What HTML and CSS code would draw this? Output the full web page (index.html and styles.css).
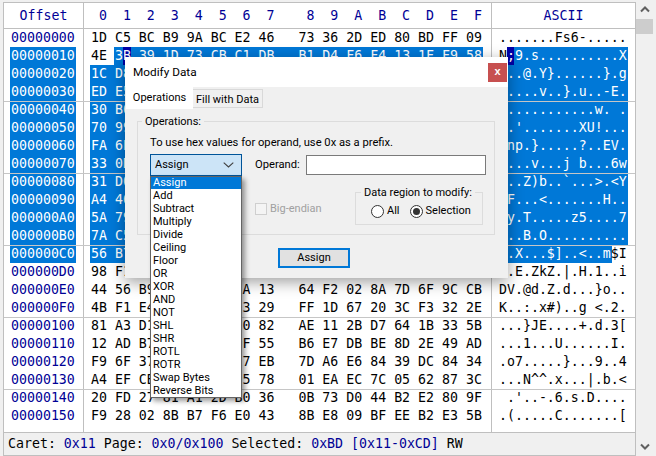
FILE: index.html
```html
<!DOCTYPE html>
<html lang="en">
<head>
<meta charset="utf-8">
<title>Modify Data</title>
<link rel="stylesheet" href="styles.css">
</head>
<body>
<div class="app">
  <div class="view">
    <div class="head"><div class="off c">Offset</div><div class="hex"> 0  1  2  3  4  5  6  7    8  9  A  B  C  D  E  F</div><div class="asc c">ASCII</div></div>
    <div class="body">
      <div class="group">
        <div class="row"><div class="off">00000000</div><div class="hex">1D C5 BC B9 9A BC E2 46   73 36 2D ED 80 BD FF 09</div><div class="asc">.......Fs6-.....</div></div>
        <div class="row"><div class="off"><span class="sel">00000010</span></div><div class="hex">4E <span class="sel">3<b class="caret">B</b> 39 1D 73 CB C1 DB   B1 D4 F6 F4 13 1F F9 58</span></div><div class="asc">N<b class="caret">;</b><span class="sel">9.s..........X</span></div></div>
        <div class="row"><div class="off"><span class="sel">00000020</span></div><div class="hex"><span class="sel">1C D8 40 B5 59 7D 8A 90   C3 11 E4 F7 06 7D A2 67</span></div><div class="asc"><span class="sel">...@.Y}......}.g</span></div></div>
        <div class="row"><div class="off"><span class="sel">00000030</span></div><div class="hex"><span class="sel">ED E5 A1 93 76 0C F2 7D   1B 75 C4 88 2D 45 9E 0A</span></div><div class="asc"><span class="sel">.....v..}.u..-E.</span></div></div>
      </div>
      <div class="group">
        <div class="row"><div class="off"><span class="sel">00000040</span></div><div class="hex"><span class="sel">30 B6 C2 81 F0 9D A3 17   D6 E2 B4 0F 77 1C 9A 05</span></div><div class="asc"><span class="sel">0...........w. .</span></div></div>
        <div class="row"><div class="off"><span class="sel">00000050</span></div><div class="hex"><span class="sel">70 99 27 C3 8E 04 B1 F6   12 D3 58 55 21 A7 90 CE</span></div><div class="asc"><span class="sel">p.'.......XU!...</span></div></div>
        <div class="row"><div class="off"><span class="sel">00000060</span></div><div class="hex"><span class="sel">FA 6E 70 E1 7D 93 0B C8   AF 16 3F 84 D2 45 56 F3</span></div><div class="asc"><span class="sel">.np.}.....?..EV.</span></div></div>
        <div class="row"><div class="off"><span class="sel">00000070</span></div><div class="hex"><span class="sel">33 0D 9C B2 76 E8 1A 95   6A 20 62 F4 07 CD 36 77</span></div><div class="asc"><span class="sel">3...v...j b...6w</span></div></div>
      </div>
      <div class="group">
        <div class="row"><div class="off"><span class="sel">00000080</span></div><div class="hex"><span class="sel">31 D0 8F 5A 29 62 B3 C7   60 A9 E5 1B 3E 94 3C 59</span></div><div class="asc"><span class="sel">1..Z)b..`...>.&lt;Y</span></div></div>
        <div class="row"><div class="off"><span class="sel">00000090</span></div><div class="hex"><span class="sel">A4 46 0E B7 D9 3C F1 82   C5 1D 96 E0 7A 48 B2 13</span></div><div class="asc"><span class="sel">.F...&lt;.......H..</span></div></div>
        <div class="row"><div class="off"><span class="sel">000000A0</span></div><div class="hex"><span class="sel">5A 79 C1 54 8D 03 EB 96   A2 7A 35 D4 1F 80 B9 37</span></div><div class="asc"><span class="sel">Zy.T.....z5....7</span></div></div>
        <div class="row"><div class="off"><span class="sel">000000B0</span></div><div class="hex"><span class="sel">7A C5 1E 42 A0 4F 92 D7   0C B8 F3 65 81 E9 2A C4</span></div><div class="asc"><span class="sel">z..B.O..........</span></div></div>
      </div>
      <div class="group">
        <div class="row"><div class="off"><span class="sel">000000C0</span></div><div class="hex"><span class="sel">56 B7 58 E3 0A 91 24 5D   C6 8F 3C D1 A4 6D</span> 24 49</div><div class="asc"><span class="sel">V.X...$]..&lt;..m</span>$I</div></div>
        <div class="row"><div class="off">000000D0</div><div class="hex">98 F1 45 B0 5A 6B 5A 8C   7C E3 48 9D 31 D6 A7 69</div><div class="asc">..E.ZkZ.|.H.1..i</div></div>
        <div class="row"><div class="off">000000E0</div><div class="hex">44 56 B9 40 64 C2 9A 13   64 F2 02 8A 7D 6F 9C CB</div><div class="asc">DV.@d.Z.d...}o..</div></div>
        <div class="row"><div class="off">000000F0</div><div class="hex">4B F1 E4 3A D0 78 23 29   FF 1D 67 20 3C F3 32 2E</div><div class="asc">K..:.x#)..g &lt;.2.</div></div>
      </div>
      <div class="group">
        <div class="row"><div class="off">00000100</div><div class="hex">81 A3 D1 7D 4A 45 C0 82   AE 11 2B D7 64 1B 33 5B</div><div class="asc">...}JE....+.d.3[</div></div>
        <div class="row"><div class="off">00000110</div><div class="hex">12 AD B7 31 9C E5 0F 55   B6 E7 DB BE 8D 2E 49 AD</div><div class="asc">...1...U......I.</div></div>
        <div class="row"><div class="off">00000120</div><div class="hex">F9 6F 37 A2 D5 C8 17 EB   7D A6 E6 84 39 DC 84 34</div><div class="asc">.o7.....}...9..4</div></div>
        <div class="row"><div class="off">00000130</div><div class="hex">A4 EF CB 4E 5E 5E 95 78   01 EA EC 7C 05 62 87 3C</div><div class="asc">...N^^.x...|.b.&lt;</div></div>
      </div>
      <div class="group last">
        <div class="row"><div class="off">00000140</div><div class="hex">20 FD 27 81 A1 2D B0 36   0B 73 D0 44 B2 E2 80 9F</div><div class="asc"> .'..-.6.s.D....</div></div>
        <div class="row"><div class="off">00000150</div><div class="hex">F9 28 02 8B B7 F6 E0 43   8B E8 09 BF EE B2 E3 5B</div><div class="asc">.(.....C.......[</div></div>
        <div class="row fill"><div class="off"></div><div class="hex"></div><div class="asc"></div></div>
      </div>
    </div>
    <div class="status">Caret: <i>0x11</i> Page: <i>0x0/0x100</i> Selected: <i>0xBD [0x11-0xCD]</i> RW</div>
  </div>
  <div class="scroll">
    <div class="arrow"><svg width="10" height="7" viewBox="0 0 10 7"><path d="M1 5.5 5 1.5 9 5.5" fill="none" stroke="#606060" stroke-width="2"/></svg></div>
    <div class="thumb"></div>
    <div class="arrow"><svg width="10" height="7" viewBox="0 0 10 7"><path d="M1 1.5 5 5.5 9 1.5" fill="none" stroke="#606060" stroke-width="2"/></svg></div>
  </div>
</div>

<div class="dialog">
  <div class="title"><span>Modify Data</span><div class="close">x</div></div>
  <div class="tabs"><div class="tab active">Operations</div><div class="tab">Fill with Data</div></div>
  <fieldset class="ops">
    <legend>Operations:</legend>
    <p class="hint">To use hex values for operand, use 0x as a prefix.</p>
    <div class="line">
      <div class="combo">
        <span>Assign</span>
        <svg width="11" height="6" viewBox="0 0 11 6"><path d="M.7.7 5.5 5 10.3.7" fill="none" stroke="#404040" stroke-width="1.1"/></svg>
        <ul class="list">
          <li class="on">Assign</li><li>Add</li><li>Subtract</li><li>Multiply</li><li>Divide</li><li>Ceiling</li><li>Floor</li><li>OR</li><li>XOR</li><li>AND</li><li>NOT</li><li>SHL</li><li>SHR</li><li>ROTL</li><li>ROTR</li><li>Swap Bytes</li><li>Reverse Bits</li>
        </ul>
      </div>
      <span class="oplabel">Operand:</span>
      <div class="input"></div>
    </div>
    <div class="lower">
      <div class="check"><span class="box"></span><span>Big-endian</span></div>
      <fieldset class="region">
        <legend>Data region to modify:</legend>
        <div class="radios">
          <span class="radio"></span><span class="rlabel">All</span>
          <span class="radio checked"></span><span>Selection</span>
        </div>
      </fieldset>
    </div>
  </fieldset>
  <div class="actions"><div class="btn">Assign</div></div>
</div>
</body>
</html>
```
FILE: styles.css
```css
* { box-sizing: border-box; }
html, body { margin: 0; padding: 0; }
body { width: 656px; height: 456px; overflow: hidden; background: #f0f0f0; position: relative; }

.app { display: flex; height: 456px; padding: 2px 0 0 3px; }
.view {
  width: 633px;
  display: flex;
  flex-direction: column;
  border: 1px solid #bfbfbf;
  background: #fff;
  font: 13.25px/18px "DejaVu Sans Mono", monospace;
  color: #000;
}
.head { display: flex; height: 26px; line-height: 25px; border-bottom: 1px solid #bfbfbf; color: #000096; }
.body { flex: 1; display: flex; flex-direction: column; }
.group { position: relative; height: 72px; }
.group + .group::before {
  content: "";
  position: absolute;
  left: 0; right: 0; top: 0;
  height: 1px;
  background: #c6c6c6;
}
.group.last { flex: 1; display: flex; flex-direction: column; }
.row { display: flex; height: 18px; }
.row.fill { flex: 1; }
.off, .hex, .asc { white-space: pre; padding-left: 7px; }
.off { width: 80px; border-right: 1px solid #bfbfbf; }
.hex { width: 408px; border-right: 1px solid #bfbfbf; }
.asc { flex: 1; }
.c { text-align: center; padding-left: 0; }
.row .off { color: #000096; }
.sel {
  display: inline-block;
  height: 18px;
  background: #0078d7;
  color: #fff;
  margin: 0 -1px;
  padding: 0 1px;
  vertical-align: top;
}
.row .off .sel { color: #fff; }
.caret { display: inline-block; height: 18px; background: #0000a8; color: #fff; font-weight: normal; vertical-align: top; }

.status {
  height: 23px;
  line-height: 21px;
  padding-left: 4px;
  background: #f0f0f0;
  border-top: 1px solid #bfbfbf;
  white-space: pre;
}
.status i { font-style: normal; color: #000096; }

.scroll { width: 17px; margin-left: 0; display: flex; flex-direction: column; margin-top: -2px; }
.arrow { height: 19px; display: flex; align-items: center; justify-content: center; }
.thumb { height: 15px; background: #cdcdcd; margin-bottom: auto; }

.dialog {
  position: absolute;
  left: 125px; top: 57px;
  width: 383px; height: 221px;
  background: #f0f0f0;
  box-shadow: 0 4px 14px rgba(0, 0, 0, .38);
  font: 11px/14px Roboto, sans-serif;
  color: #000;
}
.title { height: 30px; background: #fff; display: flex; align-items: center; justify-content: space-between; padding: 0 1px 0 8px; font-size: 11.8px; }
.close { width: 19px; height: 19px; background: #c75050; color: #fff; font: bold 11px/17px "Liberation Sans", sans-serif; text-align: center; }
.tabs { display: flex; align-items: flex-start; padding-left: 1px; height: 22px; }
.tab { height: 19px; margin-top: 2px; padding: 0; line-height: 19px; border: 1px solid #d9d9d9; border-left: 0; width: 70px; text-align: center; white-space: nowrap; }
.tab.active { background: #fff; height: 22px; margin-top: 0; width: 67px; border: 0; line-height: 21px; }

fieldset { margin: 0; padding: 0; min-width: 0; border: 1px solid #dcdcdc; }
legend { padding: 1px 3px 0; margin-left: -8px; line-height: 16px; white-space: nowrap; }
.ops { width: 358px; height: 122px; margin: 4px 0 0 12px; padding: 0 8px 0 12px; }
.hint { margin: 6px 0 4px; line-height: 14px; font-size: 11.2px; }
.line { display: flex; align-items: center; height: 22px; }
.combo {
  position: relative;
  width: 92px; height: 22px;
  padding: 0 7px 0 4px;
  background: #cce4f7;
  border: 1px solid #005499;
  display: flex;
  align-items: center;
  justify-content: space-between;
}
.list {
  position: absolute;
  left: -1px; top: 21px;
  width: 92px;
  margin: 0; padding: 0;
  list-style: none;
  background: #fff;
  border: 1px solid #646464;
  box-shadow: 3px 3px 5px rgba(0, 0, 0, .4);
  z-index: 2;
}
.list li { height: 13px; line-height: 13px; padding-left: 2px; white-space: nowrap; }
.list li.on { background: #0078d7; color: #fff; height: 12px; line-height: 12px; }
.oplabel { margin-left: 13px; width: 51px; font-size: 11.2px; }
.input { width: 180px; height: 20px; background: #fff; border: 1px solid #7a7a7a; }
.lower { display: flex; justify-content: space-between; align-items: flex-start; margin-top: 8px; padding-left: 105px; padding-right: 3px; }
.check { display: flex; align-items: center; margin-top: 18px; color: #a0a0a0; gap: 3px; }
.box { width: 12px; height: 12px; border: 1px solid #cfcfcf; background: #f4f4f4; }
.region { width: 128px; height: 41px; padding: 0; }
.region legend { margin-left: 5px; color: #000; }
.radios { display: flex; align-items: center; padding-left: 15px; margin-top: 3px; }
.radio { width: 13px; height: 13px; margin-right: 3px; border: 1px solid #333; border-radius: 50%; background: #fff; position: relative; }
.radio.checked::after { content: ""; position: absolute; left: 2px; top: 2px; width: 7px; height: 7px; border-radius: 50%; background: #333; }
.rlabel { margin-right: 10px; }
.actions { display: flex; justify-content: center; padding: 13px 0 0 0; margin-left: -5px; }
.btn { width: 72px; height: 20px; line-height: 16px; text-align: center; background: #e1e1e1; border: 2px solid #0078d7; }
```
